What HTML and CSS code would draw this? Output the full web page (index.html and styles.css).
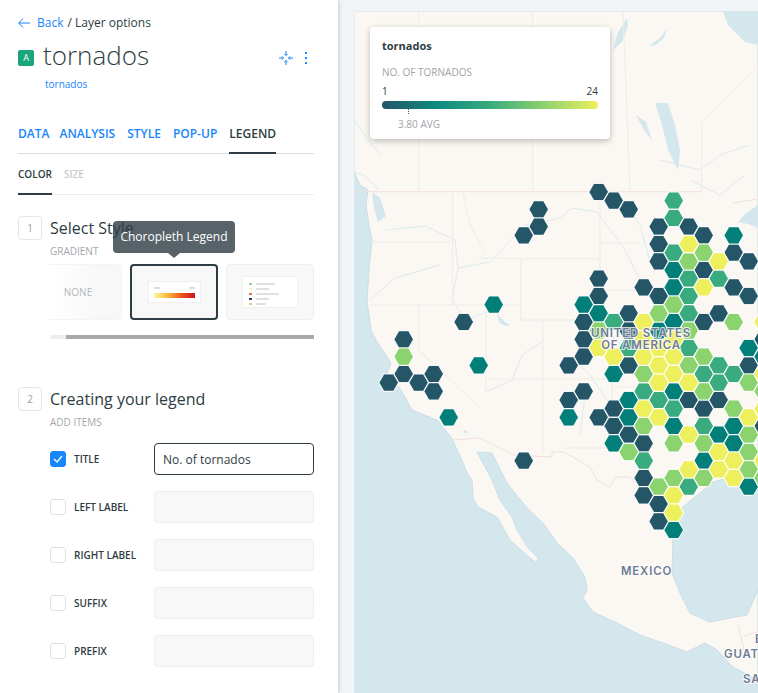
FILE: index.html
```html
<!DOCTYPE html>
<html lang="en">
<head>
  <meta charset="UTF-8">
  <title>Layer options</title>
  <link rel="stylesheet" href="styles.css">
</head>
<body>

<!-- Layer panel -->
<aside class="panel">
  <div class="crumbs">
    <svg class="back-arrow" width="12" height="10" viewBox="0 0 12 10"><path d="M5 .5.7 5 5 9.500M.7 5H12"/></svg>
    <a class="link">Back</a> <span>/ Layer options</span>
  </div>

  <div class="layer-head">
    <span class="badge">A</span>
    <h1>tornados</h1>
    <svg class="focus-icon" width="16" height="16" viewBox="0 0 16 16">
      <path d="M8 1v4.500M6.300 3.800 8 5.500l1.700-1.700M8 15v-4.500M6.300 12.200 8 10.500l1.700 1.700M1 8h4.500M3.800 6.300 5.500 8l-1.700 1.700M15 8h-4.500M12.200 6.300 10.500 8l1.700 1.700"/>
    </svg>
    <span class="dots"><i></i><i></i><i></i></span>
  </div>
  <a class="link source">tornados</a>

  <nav class="tabs">
    <a>DATA</a><a>ANALYSIS</a><a>STYLE</a><a>POP-UP</a><a class="active">LEGEND</a>
  </nav>
  <nav class="subtabs">
    <a class="active">COLOR</a><a>SIZE</a>
  </nav>

  <section class="step step-style">
    <div class="step-head"><span class="step-num">1</span><h2>Select Style</h2></div>
    <div class="step-body">
      <p class="caption">GRADIENT</p>
      <div class="tooltip">Choropleth Legend</div>
      <div class="cards">
        <div class="card card-none">NONE</div>
        <div class="card selected">
          <div class="thumb thumb-gradient">
            <div class="thumb-ticks"><i></i><i></i></div>
            <div class="thumb-bar"></div>
          </div>
        </div>
        <div class="card">
          <div class="thumb thumb-list">
            <div><i class="c1"></i><b class="w1"></b></div>
            <div><i class="c2"></i><b class="w2"></b></div>
            <div><i class="c3"></i><b class="w3"></b></div>
            <div><i class="c4"></i><b class="w4"></b></div>
            <div><i class="c5"></i><b class="w5"></b></div>
          </div>
        </div>
      </div>
      <div class="scrollbar"><div class="thumb-scroll"></div></div>
    </div>
  </section>

  <section class="step step-items">
    <div class="step-head"><span class="step-num">2</span><h2>Creating your legend</h2></div>
    <div class="step-body">
      <p class="caption">ADD ITEMS</p>
      <div class="field">
        <span class="check checked"><svg width="10" height="8" viewBox="0 0 10 8"><path d="M1 4l3 3 5-6"/></svg></span>
        <label>TITLE</label>
        <div class="input focus">No. of tornados</div>
      </div>
      <div class="field"><span class="check"></span><label>LEFT LABEL</label><div class="input"></div></div>
      <div class="field"><span class="check"></span><label>RIGHT LABEL</label><div class="input"></div></div>
      <div class="field"><span class="check"></span><label>SUFFIX</label><div class="input"></div></div>
      <div class="field"><span class="check"></span><label>PREFIX</label><div class="input"></div></div>
    </div>
  </section>
</aside>

<!-- Map -->
<main class="stage">
  <div class="map">
    <svg id="mapSvg" class="map-svg" width="404" height="682" viewBox="354 11 404 682">
      <rect class="water" x="354" y="11" width="404" height="682"/>
      <path class="land" d="M354 11V172L360 185 368 190 366 205 369 225 372 240 369 270 367 300 371 330 376 340 391 363 387 373 401 390 412 410 437 420 451 437 461 458 467 473 472 480 473 498 478 507 497 517 510 540 530 558 537 563 538 558 528 548 517 530 512 517 500 500 492 480 484 465 477 452 492 453 507 483 527 508 543 523 557 543 573 558 585 577 587 590 583 598 593 612 617 623 640 635 663 643 687 652 705 643 717 650 733 667 758 680V590L747 615 730 618 710 622 690 613 680 593 672 573 673 537 683 507 713 482 727 478 740 487 758 483V11Z"/>

      <!-- lakes -->
      <path class="lake" d="M723 11 728 25 745 42 758 45V11ZM738 222 745 214 758 205V228L748 224ZM655 103 668 103 675 125 680 150 678 170 668 150 662 125ZM613 50 618 32 627 18 628 26 622 42ZM650 45 660 38 667 28 664 38 654 46ZM636 115 646 122 652 140 644 130ZM372 192 380 198 386 216 378 222 374 208ZM497 314 505 322 510 325 505 326 499 322ZM463 429 468 432 465 434Z"/>

      <!-- rivers -->
      <path class="river" d="M354 120 368 140 380 155M354 172 366 176 378 190M385 230 425 226 455 240 458 268 490 262 525 225 560 218 572 208 597 212 625 250 645 290M458 268 452 300 466 320 492 310M370 300 395 278 440 265M620 196 640 225 650 262M486 392 512 380 522 355 545 340M650 465 590 375 575 360M690 180 720 195 745 175M660 160 700 170 720 155 750 145M565 410 585 395 580 435"/>

      <!-- borders -->
      <path class="state" d="M418.700 11V191M532.700 11V191M623 11 630 191M701.700 191V123L758 65M452.700 191V305M463 192 470 225 485 252 480 258 520.700 258.700H600M370 242H453M370 305H520.700M520.700 258.700V320H605M600 180V300M600 243H640M600 290H640M543 320V455M418.700 305V350L479 407M486 305V392M486 379H612V387H636M563 448H610M612 387V408M605 320 615 340 625 348 660 352"/>
      <path class="border" d="M354 191.700H702M733 203 758 199M452 440 479 438 514 455 552 457V452H563L573 457 590 467 597 480 610 487 615 477 630 477 643 490 653 510 663 530 673 538M738 625 744 650 752 660M744 636 758 632"/>

      <g id="hexLayer"></g>

      <text class="place" x="641" y="337" text-anchor="middle">UNITED STATES</text>
      <text class="place" x="641" y="349" text-anchor="middle">OF AMERICA</text>
      <text class="place" x="646.500" y="575" text-anchor="middle">MEXICO</text>
      <text class="place" x="724" y="658">GUATE</text>
      <text class="place" x="743" y="683">SA</text>
      <text class="place" x="755" y="643">B</text>
    </svg>

    <div class="legend">
      <h3>tornados</h3>
      <p class="legend-title">NO. OF TORNADOS</p>
      <div class="legend-range"><span>1</span><span>24</span></div>
      <div class="legend-bar"><i class="avg-mark"></i></div>
      <p class="legend-avg">3.80 AVG</p>
    </div>
  </div>
</main>

<script src="map.js"></script>
</body>
</html>
```

FILE: styles.css
```css
* { margin: 0; padding: 0; box-sizing: border-box; }
html, body {
  width: 100%;
  height: 100%;
  overflow: hidden;
  font-family: "Open Sans", sans-serif;
  color: #2e3c43;
  background: #f2f5f8;
}
body { display: flex; }
a { display: inline-block; }
.link { color: #1785fb; }

/* panel */
.panel {
  position: relative;
  z-index: 2;
  width: 338px;
  height: 693px;
  flex: none;
  padding: 15px 24px 0 18px;
  background: #fff;
  box-shadow: 0 0 5px rgba(60, 75, 90, .35);
}
.crumbs {
  display: flex;
  align-items: center;
  gap: 4px;
  height: 16px;
  font-size: 12px;
  line-height: 16px;
}
.back-arrow { margin-right: 3px; fill: none; stroke: #1785fb; }
.layer-head {
  display: flex;
  align-items: center;
  margin-top: 5px;
  height: 38px;
}
.badge {
  width: 16px;
  height: 16px;
  margin-top: 6px;
  flex: none;
  border-radius: 2px;
  background: #1ba57c;
  color: #fff;
  font-size: 9px;
  line-height: 16px;
  text-align: center;
}
.layer-head h1 {
  flex: 1;
  margin-left: 9px;
  font-size: 26px;
  font-weight: 300;
  line-height: 38px;
}
.focus-icon {
  margin: 6px 11px 0 0;
  fill: none;
  stroke: #1785fb;
  stroke-width: 1;
}
.dots {
  display: flex;
  flex-direction: column;
  gap: 3px;
  width: 2px;
  margin: 6px 7px 0 0;
}
.dots i { width: 2px; height: 2px; background: #1785fb; }
.source {
  display: block;
  margin: 2px 0 0 27px;
  font-size: 10px;
  line-height: 16px;
}

.tabs {
  display: flex;
  gap: 12px;
  height: 32px;
  margin-top: 30px;
  border-bottom: 1px solid #dcdfe1;
  font-size: 12px;
  font-weight: 600;
  line-height: 16px;
  color: #1785fb;
}
.tabs a { height: 32px; padding-top: 4px; }
.tabs a:first-child { margin-right: -2px; }
.tabs a.active { color: #2e3c43; border-bottom: 2px solid #2e3c43; }
.subtabs {
  display: flex;
  gap: 12px;
  height: 41px;
  border-bottom: 1px solid #eceeef;
  font-size: 10px;
  font-weight: 600;
  line-height: 14px;
  color: #c8cbcd;
}
.subtabs a { height: 41px; padding-top: 13px; }
.subtabs a.active { color: #2e3c43; border-bottom: 2px solid #2e3c43; }

/* steps */
.step-style { margin-top: 21px; }
.step-items { margin-top: 48px; }
.step-head { display: flex; align-items: center; gap: 8px; height: 24px; }
.step-head h2 { font-size: 16px; font-weight: 400; line-height: 24px; }
.step-num {
  width: 24px;
  height: 24px;
  border: 1px solid #e4e6e7;
  border-radius: 4px;
  color: #9aa0a4;
  font-size: 10px;
  line-height: 22px;
  text-align: center;
}
.step-body { position: relative; margin-left: 32px; }
.caption {
  margin-top: 4px;
  font-size: 10px;
  line-height: 14px;
  color: #a3a7aa;
}

/* style cards */
.cards {
  display: flex;
  gap: 8px;
  margin-top: 6px;
  overflow: hidden;
}
.card {
  display: flex;
  align-items: center;
  justify-content: center;
  flex: none;
  width: 88px;
  height: 56px;
  border: 1px solid #eceeef;
  border-radius: 4px;
  background: #f8f8f8;
}
.card-none {
  margin-left: -16px;
  border-color: #f4f4f4;
  background: linear-gradient(90deg, #fff 20%, #f8f8f8 70%);
  color: #b4b7b9;
  font-size: 10px;
}
.card.selected { border: 2px solid #2e3c43; }
.thumb { background: #fff; border: 1px solid #f0f0f0; }
.thumb-gradient { width: 53px; height: 22px; padding: 5px 5px 0; }
.thumb-ticks { display: flex; justify-content: space-between; }
.thumb-ticks i { width: 6px; height: 2px; background: #ddd; }
.thumb-bar {
  height: 5px;
  margin-top: 4px;
  background: linear-gradient(90deg, #fff6a3, #f8b53a 35%, #ee5a1e 65%, #c3161c);
}
.thumb-list {
  display: flex;
  flex-direction: column;
  gap: 3px;
  width: 56px;
  height: 32px;
  padding: 6px 6px 0;
}
.thumb-list div { display: flex; gap: 4px; height: 2px; }
.thumb-list i { width: 3px; height: 2px; }
.thumb-list b { height: 2px; background: #e0e0e0; }
.c1 { background: #8fd694; }
.c2 { background: #f6f3c4; }
.c3 { background: #d9705f; }
.c4 { background: #2f3a5c; }
.c5 { background: #efc67c; }
.w1 { width: 19px; }
.w2 { width: 13px; }
.w3 { width: 23px; }
.w4 { width: 13px; }
.w5 { width: 10px; }
.scrollbar { height: 4px; margin-top: 15px; background: #eee; }
.thumb-scroll { height: 4px; margin-left: 16px; background: #aaa; }

.tooltip {
  position: absolute;
  top: -23px;
  left: 63px;
  z-index: 3;
  width: 122px;
  height: 32px;
  border-radius: 4px;
  background: rgba(46, 60, 67, .8);
  color: #fff;
  font-size: 12px;
  line-height: 32px;
  text-align: center;
}
.tooltip::after {
  content: "";
  position: absolute;
  left: 55px;
  bottom: -5px;
  border-top: 5px solid rgba(46, 60, 67, .8);
  border-left: 6px solid transparent;
  border-right: 6px solid transparent;
}

/* legend fields */
.field { display: flex; align-items: center; height: 32px; margin-bottom: 16px; }
.step-items .caption + .field { margin-top: 14px; }
.check {
  display: flex;
  align-items: center;
  justify-content: center;
  width: 16px;
  height: 16px;
  flex: none;
  border: 1px solid #dfe1e2;
  border-radius: 3px;
}
.check.checked { background: #1785fb; border-color: #1785fb; }
.check svg { fill: none; stroke: #fff; stroke-width: 1.300; }
.field label {
  width: 88px;
  flex: none;
  padding-left: 8px;
  font-size: 10px;
  font-weight: 600;
}
.input {
  flex: 1;
  height: 32px;
  padding-left: 8px;
  border: 1px solid #eceeef;
  border-radius: 4px;
  background: #f8f8f8;
  font-size: 12px;
  line-height: 32px;
}
.input.focus { background: #fff; border-color: #2e3c43; }

/* map */
.stage { flex: 1; min-width: 0; padding: 11px 0 0 16px; }
.map { position: relative; height: 682px; overflow: hidden; border-top-left-radius: 4px; }
.map-svg { display: block; }
.water { fill: #d4e7ec; }
.land { fill: #fbf8f4; stroke: #c9dfe5; stroke-width: 1; }
.lake { fill: #d4e7ec; stroke: none; }
.river { fill: none; stroke: #dbeaed; stroke-width: 1; }
.state { fill: none; stroke: #eeebe7; stroke-width: 1; }
.border { fill: none; stroke: #f0dfdd; stroke-width: 1; }
.hex { stroke: #fff; stroke-width: 1.200; stroke-opacity: .9; }
.place {
  fill: #6f7c92;
  font-family: "Inter", sans-serif;
  font-size: 11.500px;
  font-weight: 600;
  letter-spacing: .8px;
  paint-order: stroke;
  stroke: #fff;
  stroke-width: 2px;
  stroke-opacity: .8;
}

.legend {
  position: absolute;
  top: 16px;
  left: 16px;
  width: 240px;
  height: 112px;
  padding: 11px 12px 0;
  border-radius: 4px;
  background: #fff;
  box-shadow: 0 2px 6px rgba(0, 0, 0, .25);
}
.legend h3 { font-size: 11px; font-weight: 700; line-height: 16px; }
.legend-title {
  margin-top: 11px;
  font-size: 10px;
  line-height: 14px;
  color: #a0a4a7;
}
.legend-range {
  display: flex;
  justify-content: space-between;
  margin-top: 5px;
  font-size: 10px;
  line-height: 14px;
}
.legend-bar {
  position: relative;
  height: 8px;
  margin-top: 3px;
  border-radius: 4px;
  background: linear-gradient(90deg, #245668, #0d8a7f 25%, #39ab7e 50%, #8ed16f 75%, #edef5d);
}
.avg-mark {
  position: absolute;
  left: 26px;
  top: 2px;
  height: 11px;
  border-left: 1px dotted #555;
}
.legend-avg {
  margin: 8px 0 0 16px;
  font-size: 10px;
  line-height: 14px;
  color: #a0a4a7;
}
```

FILE: map.js
```js
// hex bins, as [column, row] on the map's grid, one list per colour class
const bins = {
  "#245668": [[0,0],[1,1],[2,2],[-4,2],[-4,4],[-5,5],[0,10],[0,12],[-9,15],[-1,15],[-1,17],[-1,19],[-2,20],
    [-13,17],[-13,21],[-14,22],[-12,22],[-11,21],[-11,23],[-5,31],[2,14],[2,16],[2,20],[3,11],[4,4],[4,6],[4,8],[4,12],
    [6,4],[7,5],[7,9],[7,15],[8,14],[9,7],[9,11],[10,8],[10,12],[10,20],[11,17],[11,27],
    [-1,23],[-2,24],[1,25],[0,26],[1,27],[2,28],[3,29],[3,33],[3,35],[4,36],[4,38],[6,24],[7,25],[8,24]],
  "#037f7a": [[-7,13],[-8,20],[-10,26],[-1,13],[0,14],[1,21],[4,16],[5,9],[5,11],[5,15],[9,5],[10,18],[11,19],
    [-2,26],[1,29],[2,24],[2,26],[5,23],[5,27],[5,39],[7,31],[8,28],[9,27],[9,29],[10,34]],
  "#39ab7e": [[5,1],[5,3],[5,7],[6,10],[6,12],[6,14],[8,10],[1,15],[2,18],[6,18],[7,21],[8,20],[8,22],[9,21],
    [3,23],[4,24],[3,31],[5,25],[6,34],[7,27]],
  "#8bd36f": [[-13,19],[0,16],[4,14],[5,13],[6,8],[7,7],[6,16],[9,15],[7,19],[6,20],[3,21],[7,23],[10,22],[11,23],
    [3,27],[5,29],[7,29],[2,30],[4,34],[5,33],[7,33],[9,25],[10,28],[10,30],[10,32],[11,33]],
  "#edef5d": [[6,6],[8,8],[7,11],[3,15],[0,18],[1,19],[3,17],[3,19],[4,18],[5,17],[5,19],[4,20],[5,21],[4,22],[6,22],
    [3,25],[4,26],[6,28],[6,32],[5,35],[5,37],[8,30],[8,32],[9,31],[9,33],[10,26],[11,15],[11,21],[11,25],[11,31]]
};

const SVG_NS = "http://www.w3.org/2000/svg";
const layer = document.getElementById("hexLayer");

Object.keys(bins).forEach(colour => {
  bins[colour].forEach(([col, row]) => {
    const x = 598.7 + col * 15;
    const y = 192 + row * 8.667;
    const hex = document.createElementNS(SVG_NS, "polygon");
    hex.setAttribute("class", "hex");
    hex.setAttribute("fill", colour);
    hex.setAttribute("points", [[-10,0],[-5,-8.66],[5,-8.66],[10,0],[5,8.66],[-5,8.66]]
      .map(p => `${x + p[0]},${y + p[1]}`).join(" "));
    layer.appendChild(hex);
  });
});
```
